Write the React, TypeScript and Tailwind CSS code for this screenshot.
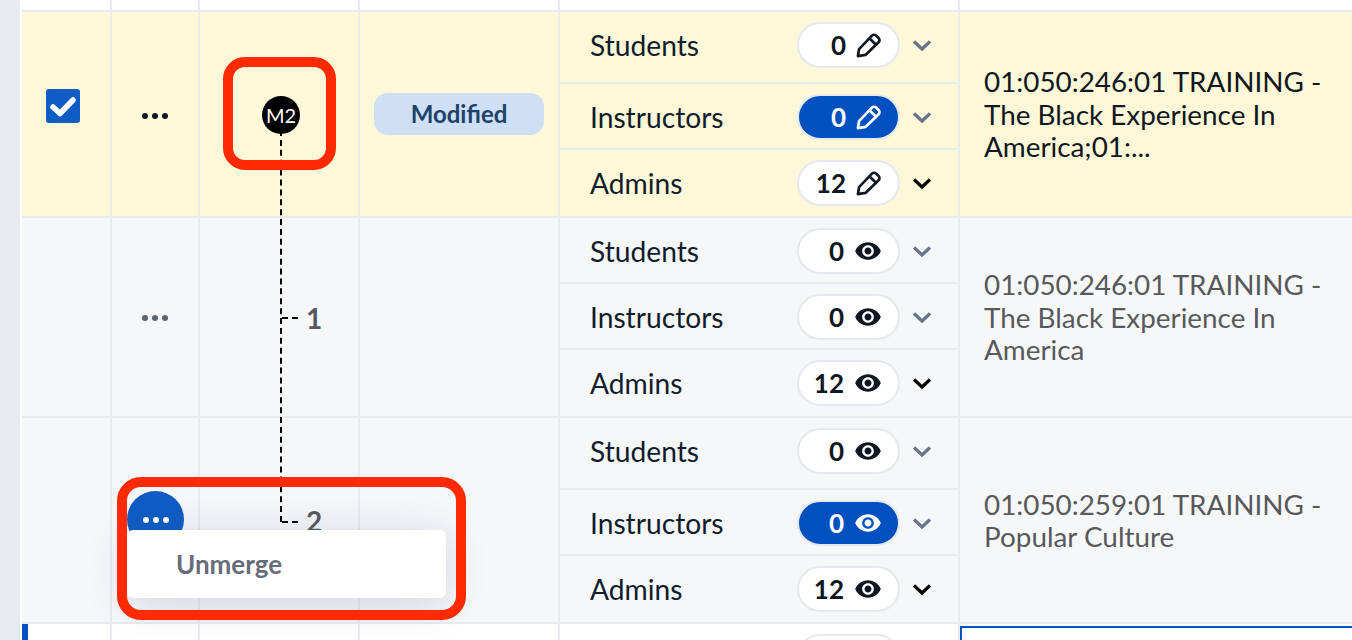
import React from "react";
import { MdVisibility } from "react-icons/md";

function Dots({ className }: { className: string }) {
  return (
    <svg width="26" height="6" viewBox="0 0 26 6" className={className} fill="currentColor">
      <circle cx="3" cy="3" r="3" />
      <circle cx="13" cy="3" r="3" />
      <circle cx="23" cy="3" r="3" />
    </svg>
  );
}

function Chevron({ dark }: { dark: boolean }) {
  return (
    <svg width="20" height="13" viewBox="0 0 20 13" fill="none" stroke="currentColor" strokeWidth="3.2" className={dark ? "text-black" : "text-[#64748b]"}>
      <path d="M2 2.5 L10 10 L18 2.5" />
    </svg>
  );
}

function PencilIcon() {
  return (
    <svg width="28" height="28" viewBox="0 0 24 24" fill="none" stroke="currentColor" strokeWidth="2.3" strokeLinejoin="round" strokeLinecap="round">
      <path d="M2.5 21.5 L3.5 15.5 L14.5 4 a2.6 2.6 0 0 1 3.7 0 l2 2 a2.6 2.6 0 0 1 0 3.7 L9 20.5 Z" />
      <path d="M12.5 6.5 L18 11.8" />
    </svg>
  );
}

type Sub = { label: string; n: number; active?: boolean; dark?: boolean; h: string };

function SubRow({ s, edit }: { s: Sub; edit: boolean }) {
  return (
    <div className={`flex items-center pl-[30px] border-b-2 border-[#e9ebef] last:border-b-0 ${s.h}`}>
      <span className="w-[207px] text-[28.2px] leading-none text-[#0f1c2b]">{s.label}</span>
      <div
        className={`flex items-center justify-end w-[103px] h-[46px] rounded-full border-2 border-[#e5e8ee] ${
          edit ? "pr-[15px] gap-[9px]" : "pr-[16px] gap-[10px]"
        } ${s.active ? "bg-[#0050c0] text-white" : "bg-white text-[#0f1720]"}`}
      >
        <span className="text-[26px] leading-none font-bold">{s.n}</span>
        {edit ? <PencilIcon /> : <MdVisibility size={28} />}
      </div>
      <span className="ml-[12px] flex">
        <Chevron dark={!!s.dark} />
      </span>
    </div>
  );
}

function Row({
  bg,
  subs,
  edit,
  text,
  textClass,
  check,
  dots,
  dotsPad,
  badge,
  h,
}: {
  bg: string;
  subs: Sub[];
  edit: boolean;
  text: string[];
  textClass: string;
  check?: React.ReactNode;
  dots?: React.ReactNode;
  dotsPad?: string;
  badge?: React.ReactNode;
  h: string;
}) {
  return (
    <div className={`flex shrink-0 border-b-2 border-[#e9ebef] ${bg} ${h}`}>
      <div className="w-[90px] flex items-center pl-[24px] border-r-2 border-[#e9ebef]">{check}</div>
      <div className={`w-[88px] flex items-center justify-center border-r-2 border-[#e9ebef] ${dotsPad ?? ""}`}>{dots}</div>
      <div className="w-[160px] border-r-2 border-[#e9ebef]" />
      <div className="w-[200px] flex items-center justify-center border-r-2 border-[#e9ebef]">{badge}</div>
      <div className="w-[400px] flex flex-col border-r-2 border-[#e9ebef]">
        {subs.map((s) => (
          <SubRow key={s.label} s={s} edit={edit} />
        ))}
      </div>
      <div className={`flex-1 flex flex-col justify-center pl-[24px] pt-[2px] text-[27.85px] leading-[32.5px] ${textClass}`}>
        {text.map((t) => (
          <div key={t} className="whitespace-nowrap">{t}</div>
        ))}
      </div>
    </div>
  );
}

export default function App() {
  return (
    <div className="relative flex h-[640px] w-[1352px] overflow-hidden bg-white font-['Lato',sans-serif]">
      <div className="w-[20px] shrink-0 bg-[#e8eaf0]" />
      <div className="w-[2px] shrink-0 bg-white" />
      <div className="flex-1 flex flex-col">
        <div className="h-[12px] shrink-0 flex border-b-2 border-[#e9ebef]">
          <div className="w-[90px] border-r-2 border-[#e9ebef]" />
          <div className="w-[88px] border-r-2 border-[#e9ebef]" />
          <div className="w-[160px] border-r-2 border-[#e9ebef]" />
          <div className="w-[200px] border-r-2 border-[#e9ebef]" />
          <div className="w-[400px] border-r-2 border-[#e9ebef]" />
        </div>
        <Row
          h="h-[206px]"
          bg="bg-[#fef8d8]"
          edit
          textClass="text-[#0f1720]"
          text={["01:050:246:01 TRAINING -", "The Black Experience In", "America;01:..."]}
          check={
            <div className="w-[34px] h-[34px] mb-[16px] rounded-[3px] bg-[#0f5cc4] flex items-center justify-center text-white">
              <svg width="30" height="30" viewBox="0 0 30 30" fill="none" stroke="currentColor" strokeWidth="5.5" strokeLinecap="round" strokeLinejoin="round">
                <path d="M5 16 L12 22.5 L25 9" />
              </svg>
            </div>
          }
          dots={<Dots className="text-[#111827]" />}
          dotsPad="pt-[4px]"
          badge={
            <div className="w-[170px] h-[42px] rounded-[14px] bg-[#cfe0f6] flex items-center justify-center text-[24px] font-bold text-[#1e4268]">
              Modified
            </div>
          }
          subs={[
            { label: "Students", n: 0, h: "h-[72px] pb-[4px]" },
            { label: "Instructors", n: 0, active: true, h: "h-[66px] pt-[2px]" },
            { label: "Admins", n: 12, dark: true, h: "h-[66px]" },
          ]}
        />
        <Row
          h="h-[200px]"
          bg="bg-[#f6f7f9]"
          edit={false}
          textClass="text-[#58595b]"
          text={["01:050:246:01 TRAINING -", "The Black Experience In", "America"]}
          dots={<Dots className="text-[#5b6270]" />}
          dotsPad="pt-[2px]"
          subs={[
            { label: "Students", n: 0, h: "h-[66px] pt-[2px]" },
            { label: "Instructors", n: 0, h: "h-[66px] pt-[2px]" },
            { label: "Admins", n: 12, dark: true, h: "h-[66px]" },
          ]}
        />
        <Row
          h="h-[206px]"
          bg="bg-[#f6f7f9]"
          edit={false}
          textClass="text-[#58595b]"
          text={["01:050:259:01 TRAINING -", "Popular Culture"]}
          subs={[
            { label: "Students", n: 0, h: "h-[72px] pb-[4px]" },
            { label: "Instructors", n: 0, active: true, h: "h-[66px] pt-[2px]" },
            { label: "Admins", n: 12, dark: true, h: "h-[66px]" },
          ]}
        />
        <div className="flex-1 min-h-0 flex overflow-hidden">
          <div className="w-[90px] border-l-[6px] border-l-[#0050c0] border-r-2 border-r-[#e9ebef]" />
          <div className="w-[88px] border-r-2 border-[#e9ebef]" />
          <div className="w-[160px] border-r-2 border-[#e9ebef]" />
          <div className="w-[200px] border-r-2 border-[#e9ebef]" />
          <div className="w-[400px] border-r-2 border-[#e9ebef] pl-[237px] pt-[10px]">
            <div className="w-[103px] h-[46px] rounded-full border-2 border-[#e5e8ee] bg-white" />
          </div>
          <div className="flex-1 mt-[2px] border-t-2 border-l-2 border-[#0050c0]" />
        </div>
      </div>

      {/* merge tree connector */}
      <div className="absolute left-[280px] top-[130px] h-[392px] w-0 border-l-2 border-dashed border-black" />
      <div className="absolute left-[282px] top-[317px] w-[16px] h-0 border-t-2 border-dashed border-black" />
      <div className="absolute left-[282px] top-[521px] w-[16px] h-0 border-t-2 border-dashed border-black" />
      <span className="absolute left-[306px] top-[302px] text-[28px] leading-[32px] font-bold text-[#55595f]">1</span>
      <span className="absolute left-[306px] top-[505px] text-[28px] leading-[32px] font-bold text-[#55595f]">2</span>

      {/* merge badge */}
      <div className="absolute left-[262px] top-[96px] w-[38px] h-[38px] rounded-full bg-black flex items-center justify-center text-white text-[20px]">
        M2
      </div>

      {/* open action + menu */}
      <div className="absolute left-[127px] top-[491px] w-[57px] h-[57px] rounded-full bg-[#0f5cc4] flex items-center justify-center text-white">
        <Dots className="text-white" />
      </div>
      <div className="absolute left-[127px] top-[530px] w-[319px] h-[68px] rounded-[6px] bg-white shadow-[0_6px_40px_rgba(60,70,100,0.2)] flex items-center pl-[49px] text-[26px] font-bold text-[#676c7a]">
        Unmerge
      </div>

      {/* annotation frames */}
      <div className="absolute left-[223px] top-[57px] w-[113px] h-[113px] rounded-[22px] border-[10px] border-[#ff2a00]" />
      <div className="absolute left-[117px] top-[477px] w-[349px] h-[143px] rounded-[24px] border-[10px] border-[#ff2a00]" />
    </div>
  );
}
